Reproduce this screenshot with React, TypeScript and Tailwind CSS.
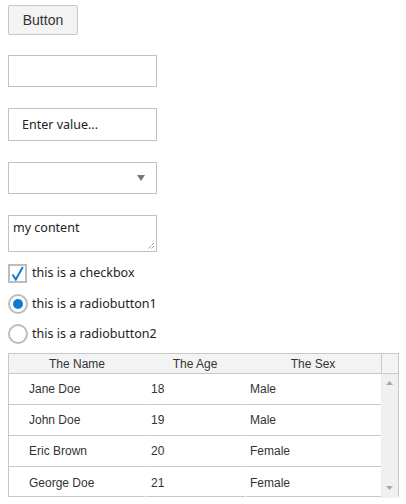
const rows = [
  { name: "Jane Doe", age: 18, sex: "Male" },
  { name: "John Doe", age: 19, sex: "Male" },
  { name: "Eric Brown", age: 20, sex: "Female" },
  { name: "George Doe", age: 21, sex: "Female" },
]

const ui = "font-['Noto_Sans','Open_Sans',sans-serif] text-[12.5px] text-[#222]"

function Radio({ checked, label }: { checked: boolean; label: string }) {
  return (
    <label className="flex items-center h-[20px] gap-[4px]">
      <span className="w-[20px] h-[20px] rounded-full border-2 border-[#bcbcbc] bg-white flex items-center justify-center">
        {checked && <span className="w-[10px] h-[10px] rounded-full bg-[#0f7bd0]" />}
      </span>
      <span className={ui}>{label}</span>
    </label>
  )
}

export default function App() {
  return (
    <div className="bg-white w-[406px] h-[504px] pt-[5px] px-[8px] flex flex-col items-start">
      <button className="w-[70px] h-[30px] bg-[#f3f3f3] border border-[#c6c6c6] rounded-[2px] text-[14px] text-[#333] font-['Liberation_Sans',Arial,sans-serif]">
        Button
      </button>

      <input className="mt-[20px] w-[149px] h-[32px] border border-[#c2c2c2] outline-none" />

      <input
        placeholder="Enter value..."
        className={`mt-[21px] w-[149px] h-[33px] border border-[#c2c2c2] px-[13px] outline-none placeholder:text-[#222] ${ui}`}
      />

      <div className="mt-[21px] w-[149px] h-[32px] border border-[#c2c2c2] flex items-center justify-end pr-[11px]">
        <svg width="8" height="6" viewBox="0 0 8 6">
          <path d="M0 0 L8 0 L4 6 Z" fill="#777" />
        </svg>
      </div>

      <div className="mt-[21px] w-[149px] h-[37px] border border-[#c2c2c2] relative px-[4px] pt-[1px] leading-[18px]">
        <span className={ui}>my content</span>
        <svg className="absolute right-[1px] bottom-[1px]" width="9" height="9" viewBox="0 0 9 9">
          <path d="M8 2 L2 8 M8 5 L5 8" stroke="#666" strokeWidth="1" strokeDasharray="1 1" />
        </svg>
      </div>

      <label className="mt-[12px] flex items-center h-[19px] gap-[5px]">
        <span className="w-[19px] h-[19px] border-2 border-[#bcbcbc] bg-white flex items-center justify-center">
          <svg width="13" height="15" viewBox="0 0 13 15">
            <path d="M1.5 8.5 L4.8 13.5 L11.8 1" stroke="#0f7bd0" strokeWidth="2" fill="none" />
          </svg>
        </span>
        <span className={ui}>this is a checkbox</span>
      </label>

      <div className="mt-[11px]">
        <Radio checked label="this is a radiobutton1" />
      </div>
      <div className="mt-[10px]">
        <Radio checked={false} label="this is a radiobutton2" />
      </div>

      <div className="mt-[9px] w-[391px] h-[144px] border border-[#c8c8c8] flex flex-col font-['Liberation_Sans',Arial,sans-serif] text-[12px] text-[#333]">
        <div className="flex h-[20px] bg-[#f3f3f3] border-b border-[#c8c8c8]">
          <div className="w-[136px] text-center leading-[20px]">The Name</div>
          <div className="w-[100px] text-center leading-[20px]">The Age</div>
          <div className="w-[136px] text-center leading-[20px]">The Sex</div>
          <div className="flex-1 border-l border-[#c8c8c8]" />
        </div>
        <div className="flex flex-1">
          <div className="w-[372px] flex flex-col">
            {rows.map((r, i) => (
              <div key={r.name} className="flex h-[31px]">
                <div className={`w-[136px] pl-[20px] flex items-center ${i < 3 ? "border-b border-[#c8c8c8]" : ""}`}>{r.name}</div>
                <div className={`w-[100px] pl-[5px] flex items-center border-l border-white ${i < 3 ? "border-b border-b-[#c8c8c8]" : ""}`}>{r.age}</div>
                <div className={`w-[136px] pl-[4px] flex items-center border-l border-white ${i < 3 ? "border-b border-b-[#c8c8c8]" : ""}`}>{r.sex}</div>
              </div>
            ))}
          </div>
          <div className="flex-1 bg-[#f0f0f0] flex flex-col items-center justify-between pt-[7px] pb-[8px]">
            <svg width="7" height="4" viewBox="0 0 7 4">
              <path d="M3.5 0 L7 4 L0 4 Z" fill="#a8a8a8" />
            </svg>
            <svg width="7" height="4" viewBox="0 0 7 4">
              <path d="M0 0 L7 0 L3.5 4 Z" fill="#a8a8a8" />
            </svg>
          </div>
        </div>
      </div>
    </div>
  )
}
